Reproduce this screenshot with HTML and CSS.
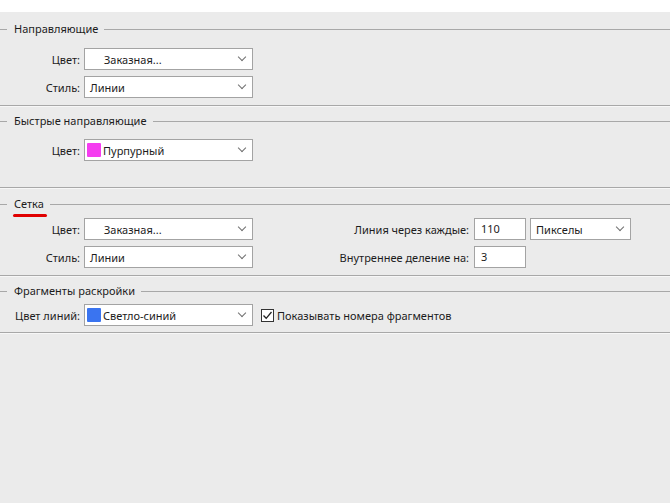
FILE: index.html
```html
<!DOCTYPE html>
<html lang="ru">
<head>
<meta charset="utf-8">
<link rel="stylesheet" href="styles.css">
</head>
<body>
<div class="topbar"></div>
<div class="panel">
  <section class="group g1">
    <div class="legend"><span class="lead"></span><span class="title">Направляющие</span><span class="rule"></span></div>
    <div class="row"><label class="lbl">Цвет:</label><div class="select"><span class="val indent">Заказная...</span><span class="chev"></span></div></div>
    <div class="row"><label class="lbl">Стиль:</label><div class="select"><span class="val">Линии</span><span class="chev"></span></div></div>
  </section>
  <div class="sep"></div>
  <section class="group g2">
    <div class="legend"><span class="lead"></span><span class="title">Быстрые направляющие</span><span class="rule"></span></div>
    <div class="row"><label class="lbl">Цвет:</label><div class="select"><span class="swatch magenta"></span><span class="val sw">Пурпурный</span><span class="chev"></span></div></div>
  </section>
  <div class="sep"></div>
  <section class="group g3">
    <div class="legend"><span class="lead"></span><span class="title marked">Сетка</span><span class="rule"></span></div>
    <div class="row">
      <label class="lbl">Цвет:</label><div class="select"><span class="val indent">Заказная...</span><span class="chev"></span></div>
      <label class="lbl2">Линия через каждые:</label><div class="input">110</div>
      <div class="select small"><span class="val">Пикселы</span><span class="chev"></span></div>
    </div>
    <div class="row">
      <label class="lbl">Стиль:</label><div class="select"><span class="val">Линии</span><span class="chev"></span></div>
      <label class="lbl2">Внутреннее деление на:</label><div class="input">3</div>
    </div>
  </section>
  <div class="sep"></div>
  <section class="group g4">
    <div class="legend"><span class="lead"></span><span class="title">Фрагменты раскройки</span><span class="rule"></span></div>
    <div class="row">
      <label class="lbl">Цвет линий:</label><div class="select"><span class="swatch blue"></span><span class="val sw">Светло-синий</span><span class="chev"></span></div>
      <label class="check"><span class="box"><svg width="11" height="11" viewBox="0 0 11 11"><path d="M1.5 5.5 L4.2 8.3 L9.5 2" fill="none" stroke="#222" stroke-width="1.3"/></svg></span>Показывать номера фрагментов</label>
    </div>
  </section>
  <div class="sep"></div>
</div>
</body>
</html>
```

FILE: styles.css
```css
html, body {
  margin: 0;
  padding: 0;
}
body {
  background: #ebebeb;
  font-family: "Noto Sans", "Open Sans", sans-serif;
  font-size: 11px;
  color: #1c1c1c;
  width: 670px;
  height: 503px;
  overflow: hidden;
}
.topbar {
  height: 12px;
  background: #ffffff;
}
.panel {
  display: flex;
  flex-direction: column;
}
.group {
  display: flex;
  flex-direction: column;
}
.legend {
  display: flex;
  align-items: center;
  height: 16px;
}
.lead {
  width: 7px;
  height: 1px;
  background: #a8a8a8;
  margin-right: 7px;
}
.title {
  line-height: 16px;
  position: relative;
}
.rule {
  flex: 1;
  height: 1px;
  background: #a8a8a8;
  margin-left: 6px;
}
.title.marked::after {
  content: "";
  position: absolute;
  left: -1px;
  right: -3px;
  bottom: -5px;
  height: 3px;
  border-radius: 2px;
  background: #e00000;
}
.g1 { padding-top: 9px; padding-bottom: 7px; }
.g2 { padding-top: 6px; padding-bottom: 26px; }
.g3 { padding-top: 7px; padding-bottom: 7px; }
.g4 { padding-top: 6px; padding-bottom: 6px; }
.g1 .legend + .row { margin-top: 11px; }
.g2 .legend + .row { margin-top: 10px; }
.g3 .legend + .row { margin-top: 6px; }
.g4 .legend + .row { margin-top: 5px; }
.row {
  display: flex;
  align-items: center;
  height: 22px;
}
.row + .row {
  margin-top: 6px;
}
.lbl {
  width: 80px;
  text-align: right;
  margin-right: 4px;
}
.lbl2 {
  width: 216px;
  text-align: right;
  margin-right: 5px;
}
.select {
  box-sizing: border-box;
  width: 169px;
  height: 22px;
  background: #ffffff;
  border: 1px solid #a3a3a3;
  display: flex;
  align-items: center;
  position: relative;
}
.select.small {
  width: 101px;
  margin-left: 4px;
}
.val {
  padding-left: 5px;
}
.val.indent {
  padding-left: 19px;
}
.val.sw {
  padding-left: 2px;
}
.swatch {
  width: 14px;
  height: 14px;
  margin-left: 2px;
  border-radius: 1px;
}
.magenta { background: #f53cf0; }
.blue { background: #3a74f0; }
.chev {
  position: absolute;
  right: 7px;
  top: 5px;
  width: 5px;
  height: 5px;
  border-right: 1px solid #707070;
  border-bottom: 1px solid #707070;
  transform: rotate(45deg);
}
.input {
  box-sizing: border-box;
  width: 52px;
  height: 22px;
  background: #ffffff;
  border: 1px solid #a3a3a3;
  padding-left: 6px;
  line-height: 20px;
}
.check {
  display: flex;
  align-items: center;
  margin-left: 8px;
}
.box {
  box-sizing: border-box;
  width: 13px;
  height: 13px;
  border: 1px solid #333;
  background: #fff;
  margin-right: 3px;
  display: flex;
  align-items: center;
  justify-content: center;
}
.box svg { display: block; }
.sep {
  height: 1px;
  background: #a8a8a8;
  border-bottom: 1px solid #f7f7f7;
}
```
